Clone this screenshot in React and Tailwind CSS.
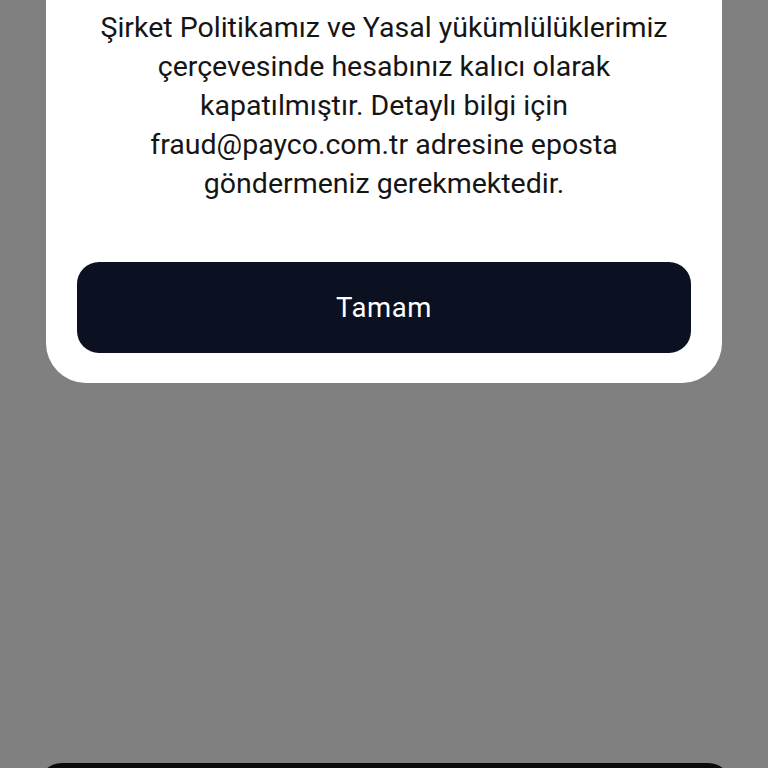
import React from "react";

export default function App() {
  return (
    <div
      className="relative w-[768px] h-[768px] overflow-hidden bg-[#808080]"
      style={{ fontFamily: "Roboto, 'Noto Sans', sans-serif" }}
    >
      <div className="mx-[46px] bg-white rounded-b-[40px] px-[31px] pt-[8px] pb-[30px]">
        <p className="text-center text-[28.5px] leading-[39px] text-[#151515] whitespace-nowrap">
          Şirket Politikamız ve Yasal yükümlülüklerimiz
          <br />
          çerçevesinde hesabınız kalıcı olarak
          <br />
          kapatılmıştır. Detaylı bilgi için
          <br />
          fraud@payco.com.tr adresine eposta
          <br />
          göndermeniz gerekmektedir.
        </p>
        <button className="mt-[59px] w-full h-[91px] rounded-[22px] bg-[#0b1120] text-white text-[27.5px] tracking-[0.6px]">
          Tamam
        </button>
      </div>

      <div className="absolute left-[38px] right-[36px] top-[763px] h-[40px] rounded-t-[24px] bg-[#0a0a0a]" />
    </div>
  );
}
